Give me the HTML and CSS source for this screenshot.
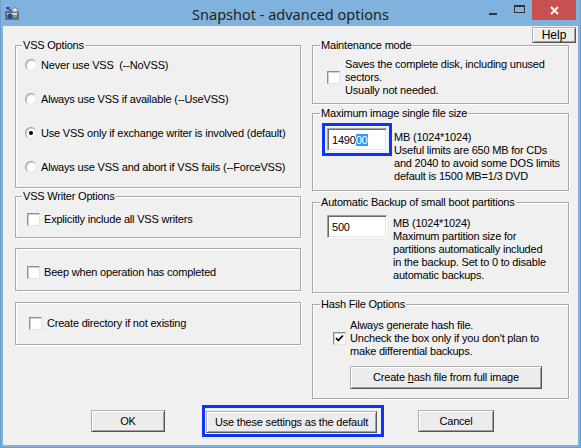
FILE: index.html
```html
<!DOCTYPE html>
<html>
<head>
<meta charset="utf-8">
<link rel="stylesheet" href="styles.css">
</head>
<body>
<div class="window">
  <div class="titlebar">
    <div class="tb-left">
      <svg class="app-icon" width="14" height="14" viewBox="0 0 14 14">
        <rect x="1" y="6" width="12" height="7" fill="#8a8a8a" stroke="#3c3c3c" stroke-width="1"/>
        <rect x="2" y="7" width="10" height="2" fill="#d8d8d8"/>
        <circle cx="5" cy="10" r="2.2" fill="#1f4fd6" stroke="#0a1f70" stroke-width="0.8"/>
        <rect x="9" y="9" width="2" height="2" fill="#2fd24a"/>
        <path d="M10 0.5 L11 3 L13.5 3 L11.5 4.6 L12.3 7 L10 5.5 L7.7 7 L8.5 4.6 L6.5 3 L9 3 Z" fill="#ffffff" stroke="#6a6a6a" stroke-width="0.5"/>
        <path d="M1 1 L5 1 L4 2 L6.5 4.5 L5.5 5.5 L3 3 L2 4 Z" fill="#1a3fd0"/>
      </svg>
    </div>
    <div class="tb-title">Snapshot - advanced options</div>
    <div class="tb-right">
      <span class="ctl ctl-min"><i class="min-glyph"></i></span>
      <span class="ctl ctl-max"><i class="max-glyph"></i></span>
      <span class="ctl ctl-close">
        <svg width="9" height="9" viewBox="0 0 9 9"><path d="M1 1 L8 8 M8 1 L1 8" stroke="#ffffff" stroke-width="2"/></svg>
      </span>
    </div>
  </div>

  <div class="client">
    <div class="help-row"><button class="btn btn-help">Help</button></div>

    <div class="columns">
      <div class="col col-left">
        <div class="group g-vss">
          <div class="legend">VSS Options</div>
          <div class="gbody">
            <div class="opt-row"><span class="radio"></span><span>Never use VSS&nbsp; (--NoVSS)</span></div>
            <div class="opt-row"><span class="radio"></span><span>Always use VSS if available (--UseVSS)</span></div>
            <div class="opt-row"><span class="radio checked"></span><span>Use VSS only if exchange writer is involved (default)</span></div>
            <div class="opt-row"><span class="radio"></span><span>Always use VSS and abort if VSS fails (--ForceVSS)</span></div>
          </div>
        </div>

        <div class="group g-writer">
          <div class="legend">VSS Writer Options</div>
          <div class="gbody">
            <div class="chk-row"><span class="checkbox"></span><span>Explicitly include all VSS writers</span></div>
          </div>
        </div>

        <div class="group g-beep">
          <div class="gbody">
            <div class="chk-row"><span class="checkbox"></span><span>Beep when operation has completed</span></div>
          </div>
        </div>

        <div class="group g-dir">
          <div class="gbody">
            <div class="chk-row"><span class="checkbox"></span><span>Create directory if not existing</span></div>
          </div>
        </div>
      </div>

      <div class="col col-right">
        <div class="group g-maint">
          <div class="legend">Maintenance mode</div>
          <div class="gbody">
            <div class="maint-row">
              <span class="checkbox"></span>
              <span class="lines">Saves the complete disk, including unused<br>sectors.<br>Usually not needed.</span>
            </div>
          </div>
        </div>

        <div class="group g-max">
          <div class="legend">Maximum image single file size</div>
          <div class="gbody">
            <div class="field-row">
              <div class="focus-ring ring-input">
                <div class="textbox">1490<span class="sel">00</span></div>
              </div>
              <div class="lines max-text">MB (1024*1024)<br>Useful limits are 650 MB for CDs<br>and 2040 to avoid some DOS limits<br>default is 1500 MB=1/3 DVD</div>
            </div>
          </div>
        </div>

        <div class="group g-auto">
          <div class="legend">Automatic Backup of small boot partitions</div>
          <div class="gbody">
            <div class="field-row">
              <div class="textbox">500</div>
              <div class="lines auto-text">MB (1024*1024)<br>Maximum partition size for<br>partitions automatically included<br>in the backup. Set to 0 to disable<br>automatic backups.</div>
            </div>
          </div>
        </div>

        <div class="group g-hash">
          <div class="legend">Hash File Options</div>
          <div class="gbody">
            <div class="hash-row">
              <span class="checkbox">
                <svg width="11" height="11" viewBox="0 0 11 11"><path d="M2 5 L4.3 7.5 L9 2.5" fill="none" stroke="#000" stroke-width="1.8"/></svg>
              </span>
              <span class="lines">Always generate hash file.<br>Uncheck the box only if you don't plan to<br>make differential backups.</span>
            </div>
            <button class="btn btn-hash">Create <u>h</u>ash file from full image</button>
          </div>
        </div>
      </div>
    </div>

    <div class="button-row">
      <button class="btn btn-ok">OK</button>
      <div class="focus-ring ring-btn"><button class="btn btn-default">Use these settings as the default</button></div>
      <button class="btn btn-cancel">Cancel</button>
    </div>
  </div>
</div>
</body>
</html>
```

FILE: styles.css
```css
* { box-sizing: border-box; }
html, body { margin: 0; padding: 0; }
body {
  width: 581px;
  height: 448px;
  overflow: hidden;
  font-family: "Liberation Sans", Arial, sans-serif;
  font-size: 11px;
  letter-spacing: -0.2px;
  color: #000;
}
.window {
  width: 581px;
  height: 448px;
  background: #7fb2dc;
  display: flex;
  flex-direction: column;
  border-left: 1px solid #6f9fc8;
  border-right: 1px solid #6f9fc8;
  border-bottom: 1px solid #6f9fc8;
}
.titlebar {
  height: 26px;
  display: grid;
  grid-template-columns: 1fr auto 1fr;
  align-items: start;
}
.tb-left { padding: 6px 0 0 4px; }
.app-icon { display: block; }
.tb-title {
  font-family: "Noto Sans", "Open Sans", sans-serif;
  font-size: 14.5px;
  letter-spacing: 0;
  line-height: 20px;
  padding-top: 4px;
  color: #222;
}
.tb-right {
  display: flex;
  justify-content: flex-end;
  padding-right: 4px;
}
.ctl {
  height: 20px;
  display: flex;
  align-items: center;
  justify-content: center;
}
.ctl-min { width: 26px; }
.ctl-max { width: 26px; }
.ctl-close { width: 44px; background: #c75050; }
.min-glyph {
  display: block;
  width: 8px;
  height: 2px;
  background: #333;
  margin-top: 8px;
}
.max-glyph {
  display: block;
  width: 11px;
  height: 8px;
  border: 1px solid #333;
  border-top-width: 2px;
  margin-top: -2px;
}

.client {
  flex: 1;
  margin: 0 2px 2px 2px;
  background: #f0f0f0;
  display: flex;
  flex-direction: column;
}
.help-row {
  display: flex;
  justify-content: flex-end;
  padding: 1px 2px 0 0;
}
.btn {
  font-family: inherit;
  font-size: 11px;
  letter-spacing: -0.2px;
  color: #000;
  background: #ececec;
  border: 1px solid;
  border-color: #b0b0b0 #555 #555 #b0b0b0;
  box-shadow: inset 1px 1px 0 #fff, inset -1px -1px 0 #a0a0a0;
  padding: 0;
  margin: 0;
  line-height: 13px;
}
.btn-help { width: 44px; height: 16px; font-size: 12px; letter-spacing: 0; }

.columns {
  display: flex;
  margin-top: 2px;
  padding-left: 12px;
  gap: 11px;
}
.col { display: flex; flex-direction: column; }
.col-left { width: 286px; }
.col-right { width: 257px; }

.group {
  border: 1px solid #a9a9a9;
  box-shadow: 1px 1px 0 #fff, inset 1px 1px 0 #fff;
}
.legend {
  display: table;
  line-height: 13px;
  margin: -7px 0 -6px 6px;
  padding: 0 1px;
  background: #f0f0f0;
}
.col-right .legend { margin-left: 7px; }

.g-vss { height: 143px; }
.g-vss .gbody { padding: 2px 0 0 9px; }
.g-writer { height: 42px; margin-top: 8px; }
.g-writer .gbody { padding: 15px 0 0 11px; }
.g-beep { height: 43px; margin-top: 10px; }
.g-beep .gbody { padding: 16px 0 0 11px; }
.g-dir { height: 43px; margin-top: 11px; }
.g-dir .gbody { padding: 13px 0 0 13px; }

.opt-row {
  height: 34px;
  display: flex;
  align-items: center;
  gap: 4px;
  line-height: 14px;
}
.chk-row {
  height: 14px;
  display: flex;
  align-items: center;
  gap: 4px;
  line-height: 14px;
}
.g-dir .chk-row { gap: 5px; }

.radio {
  width: 12px;
  height: 12px;
  border-radius: 50%;
  background: #fff;
  border: 1px solid;
  border-color: #a0a0a0 #e6e6e6 #e6e6e6 #a0a0a0;
  box-shadow: inset 1px 1px 0 #d0d0d0;
  display: flex;
  align-items: center;
  justify-content: center;
  flex: none;
}
.radio.checked::after {
  content: "";
  width: 4px;
  height: 4px;
  border-radius: 50%;
  background: #000;
}
.checkbox {
  width: 13px;
  height: 13px;
  background: #fff;
  border: 1px solid;
  border-color: #8e8e8e #e3e3e3 #e3e3e3 #8e8e8e;
  box-shadow: inset 1px 1px 0 #d0d0d0;
  display: flex;
  align-items: center;
  justify-content: center;
  flex: none;
}
.checkbox svg { display: block; }

.lines { line-height: 13px; }

.g-maint { height: 59px; }
.g-maint .gbody { padding: 12px 0 0 14px; }
.maint-row { display: flex; align-items: center; gap: 5px; }

.g-max { height: 78px; margin-top: 9px; }
.g-max .gbody { padding: 9px 0 0 9px; }
.g-auto { height: 91px; margin-top: 11px; }
.g-auto .gbody { padding: 12px 0 0 14px; }
.field-row { display: flex; align-items: flex-start; }
.focus-ring { border: 3px solid #0b35ff; }
.ring-input { padding: 2px; }
.textbox {
  width: 60px;
  height: 23px;
  background: #fff;
  border: 1px solid;
  border-color: #a0a0a0 #fff #fff #a0a0a0;
  box-shadow: inset 1px 1px 0 #696969, inset -1px -1px 0 #e3e3e3;
  padding: 4px 0 0 4px;
  line-height: 14px;
  white-space: nowrap;
}
.sel { background: #3399ff; color: #fff; }
.max-text { margin: 8px 0 0 2px; }
.auto-text { margin: 2px 0 0 6px; }

.g-hash { height: 95px; margin-top: 11px; }
.g-hash .gbody { padding: 14px 0 0 20px; }
.hash-row { display: flex; align-items: center; gap: 4px; }
.btn-hash {
  display: block;
  width: 192px;
  height: 23px;
  margin: 8px 0 0 17px;
}

.button-row {
  display: flex;
  align-items: center;
  margin-top: 6px;
  padding-left: 88px;
}
.btn-ok { width: 74px; height: 22px; }
.ring-btn { margin-left: 37px; padding: 3px 4px 1px 1px; }
.btn-default { width: 171px; height: 22px; display: block; }
.btn-cancel { width: 76px; height: 22px; margin-left: 34px; }
```
